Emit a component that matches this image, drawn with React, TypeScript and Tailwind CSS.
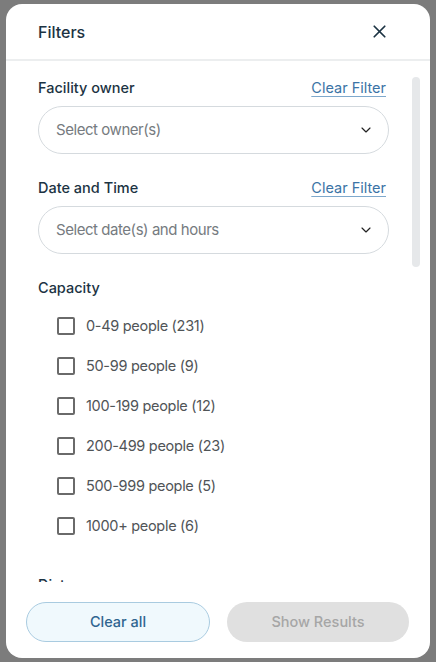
import React, { useState } from 'react';
import { X, ChevronDown } from 'lucide-react';

const capacityOptions = [
  { label: '0-49 people', count: 231 },
  { label: '50-99 people', count: 9 },
  { label: '100-199 people', count: 12 },
  { label: '200-499 people', count: 23 },
  { label: '500-999 people', count: 5 },
  { label: '1000+ people', count: 6 },
];

const FilterSelect: React.FC<{ placeholder: string }> = ({ placeholder }) => (
  <button className="w-full h-[48px] flex items-center justify-between rounded-full border border-[#d5dade] bg-white pl-[17px] pr-[14px] text-left">
    <span className="text-[15px] tracking-[-0.45px] text-[#767b80]">{placeholder}</span>
    <ChevronDown size={16} strokeWidth={1.75} className="text-[#222]" />
  </button>
);

const SectionHeader: React.FC<{ title: string; clearable?: boolean }> = ({ title, clearable }) => (
  <div className="h-[20px] flex items-center justify-between mb-[8px]">
    <span className="text-[14.5px] font-medium text-[#1c3343]">{title}</span>
    {clearable && (
      <button className="mr-[3px] text-[14.5px] text-[#3b74a6] underline underline-offset-[3px] decoration-[#7fa9cc]">Clear Filter</button>
    )}
  </div>
);

export default function App() {
  const [checked, setChecked] = useState<Record<string, boolean>>({});

  return (
    <div className="h-screen w-full bg-[#7c7c7c] px-[6px] py-[4px] flex" style={{ fontFamily: 'Inter, "Noto Sans", sans-serif' }}>
      <div className="flex-1 bg-white rounded-[16px] flex flex-col overflow-hidden">
        {/* header */}
        <div className="h-[57px] shrink-0 flex items-center justify-between pl-[32px] pr-[40px] border-b-2 border-[#eceeef]">
          <span className="text-[16px] font-medium text-[#1c3343]">Filters</span>
          <X size={21} strokeWidth={2} className="text-[#1c3343]" />
        </div>

        {/* body */}
        <div className="relative flex-1 overflow-hidden">
          <div className="pl-[32px] pr-[41px] pt-[17px]">
            <SectionHeader title="Facility owner" clearable />
            <FilterSelect placeholder="Select owner(s)" />

            <div className="mt-[24px]">
              <SectionHeader title="Date and Time" clearable />
              <FilterSelect placeholder="Select date(s) and hours" />
            </div>

            <div className="mt-[24px]">
              <SectionHeader title="Capacity" />
              <div className="mt-[7px] pl-[19px] flex flex-col">
                {capacityOptions.map(o => (
                  <label key={o.label} className="h-[40px] flex items-center gap-[11px] cursor-pointer">
                    <input
                      type="checkbox"
                      className="sr-only"
                      checked={!!checked[o.label]}
                      onChange={() => setChecked({ ...checked, [o.label]: !checked[o.label] })}
                    />
                    <span className="w-[18px] h-[18px] rounded-[2px] border-2 border-[#6a6a6a]" />
                    <span className="text-[14.5px] tracking-[-0.3px] text-[#505457]">
                      {o.label} ({o.count})
                    </span>
                  </label>
                ))}
              </div>
            </div>

            <div className="mt-[29px]">
              <SectionHeader title="Distance" />
            </div>
          </div>
          {/* scrollbar thumb */}
          <div className="absolute top-[16px] right-[10px] w-[8px] h-[190px] rounded-full bg-[#e6e8ea]" />
        </div>

        {/* footer */}
        <div className="shrink-0 h-[76px] flex items-start gap-[17px] pl-[20px] pr-[21px] pt-[20px]">
          <button className="flex-1 h-[40px] rounded-full border border-[#a9cbe0] bg-[#f0f9fd] text-[14.5px] font-medium text-[#2f6590]">Clear all</button>
          <button disabled className="flex-1 h-[40px] rounded-full bg-[#e0e0e0] text-[14.5px] font-medium text-[#a6a6a6]">Show Results</button>
        </div>
      </div>
    </div>
  );
}
